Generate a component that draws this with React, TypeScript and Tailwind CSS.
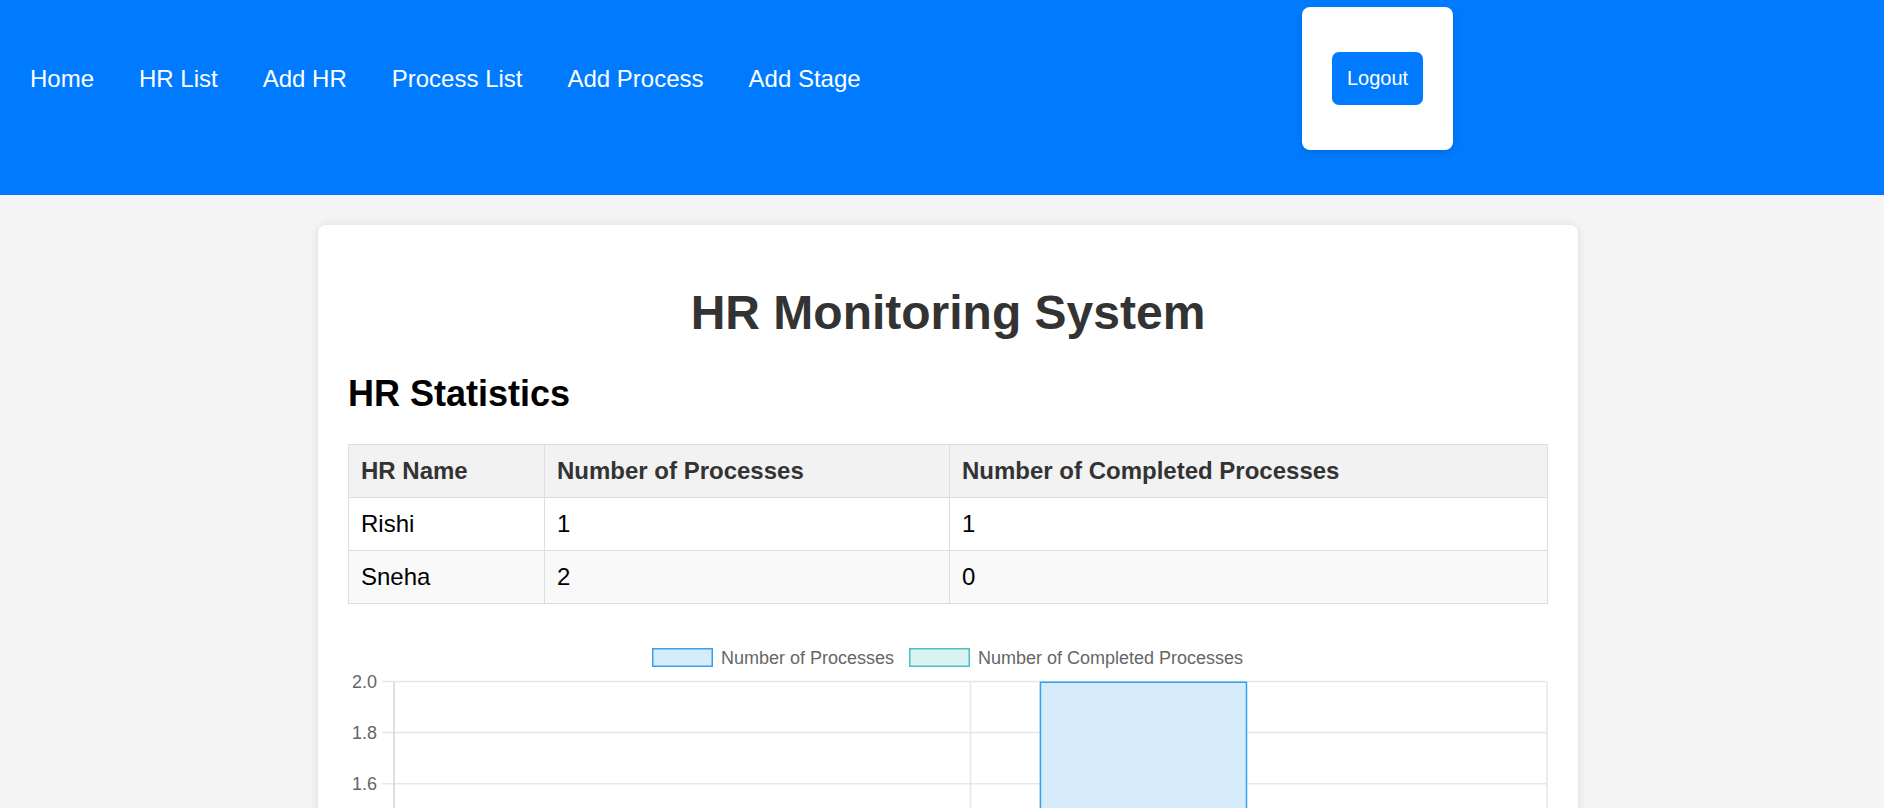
const links = ["Home", "HR List", "Add HR", "Process List", "Add Process", "Add Stage"];

const stats = [
  { name: "Rishi", total: 1, done: 1 },
  { name: "Sneha", total: 2, done: 0 },
];

// chart geometry (svg coords, svg sits at the card's content box)
const left = 46;
const right = 1199;
const top = 48.5;
const bottom = 559.5;
const maxY = 2;

function yFor(v: number) {
  return bottom - ((bottom - top) * v) / maxY;
}

function Bar({ x, w, v, fill, stroke }: { x: number; w: number; v: number; fill: string; stroke: string }) {
  if (v <= 0) return null;
  const y = yFor(v);
  return (
    <g>
      <rect x={x} y={y} width={w} height={bottom - y} fill={fill} />
      <path
        d={`M${x + 0.75} ${bottom} L${x + 0.75} ${y + 0.75} L${x + w - 0.75} ${y + 0.75} L${x + w - 0.75} ${bottom}`}
        fill="none"
        stroke={stroke}
        strokeWidth={1.5}
      />
    </g>
  );
}

function StatsChart() {
  const ticks = [0, 0.2, 0.4, 0.6, 0.8, 1, 1.2, 1.4, 1.6, 1.8, 2];
  const catW = (right - left) / stats.length;
  const groupW = catW * 0.8;
  const barSlot = groupW / 2;
  const barW = barSlot * 0.9;

  return (
    <svg width="1200" height="610" className="block" style={{ fontFamily: '"Liberation Sans", Arial, sans-serif' }}>
      {/* legend */}
      <rect x="304.75" y="15.75" width="59.5" height="17.5" fill="#d7ecfb" stroke="#36a2eb" strokeWidth="1.5" />
      <text x="373" y="31" fontSize="18" fill="#666">Number of Processes</text>
      <rect x="561.75" y="15.75" width="59.5" height="17.5" fill="#dbf2f2" stroke="#4bc0c0" strokeWidth="1.5" />
      <text x="630" y="31" fontSize="18" fill="#666">Number of Completed Processes</text>

      {/* horizontal grid + y labels */}
      {ticks.map((t) => {
        const y = yFor(t);
        return (
          <g key={t}>
            <line x1="34" x2={right} y1={y} y2={y} stroke="#e6e6e6" strokeWidth="1.5" />
            <text x="29" y={y + 6} fontSize="18" fill="#666" textAnchor="end">
              {t === 0 ? "0" : t.toFixed(1)}
            </text>
          </g>
        );
      })}

      {/* vertical grid */}
      {[0, 1, 2].map((i) => {
        const x = left + catW * i;
        return <line key={i} x1={x} x2={x} y1={top} y2={bottom + 12} stroke={i === 0 ? "#d4d4d4" : "#e6e6e6"} strokeWidth="1.5" />;
      })}

      {/* bars */}
      {stats.map((s, i) => {
        const gx = left + catW * i + (catW - groupW) / 2;
        const pad = (barSlot - barW) / 2;
        return (
          <g key={s.name}>
            <Bar x={gx + pad} w={barW} v={s.total} fill="#d7ecfb" stroke="#36a2eb" />
            <Bar x={gx + barSlot + pad} w={barW} v={s.done} fill="#dbf2f2" stroke="#4bc0c0" />
            <text x={left + catW * i + catW / 2} y={bottom + 34} fontSize="18" fill="#666" textAnchor="middle">
              {s.name}
            </text>
          </g>
        );
      })}
    </svg>
  );
}

export default function App() {
  return (
    <div className="min-h-screen bg-[#f4f4f4] font-['Liberation_Sans',Arial,sans-serif] text-[#333]">
      <nav className="bg-[#007bff] h-[195px] flex items-start pt-[7px]">
        <ul className="w-[1302px] shrink-0 h-[143px] pt-[2px] flex items-center gap-[45px] pl-[30px]">
          {links.map((l) => (
            <li key={l}>
              <a className="text-white text-[24px] leading-[28px] cursor-pointer">{l}</a>
            </li>
          ))}
        </ul>
        <div className="bg-white rounded-[8px] shadow-[0_3px_8px_rgba(0,0,0,0.12)] px-[30px] py-[45px]">
          <button className="bg-[#007bff] text-white text-[20px] leading-[23px] h-[53px] w-[91px] rounded-[7px] font-['Liberation_Sans',Arial,sans-serif]">
            Logout
          </button>
        </div>
      </nav>

      <main className="flex justify-center pt-[30px] pl-[12px] pb-[30px]">
        <div className="w-[1260px] bg-white rounded-[8px] shadow-[0_0_10px_rgba(0,0,0,0.1)] px-[30px] pt-[30px] pb-[30px]">
          <h1 className="mt-[30px] text-center text-[48px] leading-[55px] font-bold text-[#333]">HR Monitoring System</h1>
          <h2 className="mt-[33px] mb-[30px] text-[36px] leading-[41px] font-bold text-black">HR Statistics</h2>

          <table className="w-full table-fixed border-collapse text-[24px] leading-[28px]">
            <colgroup>
              <col className="w-[196px]" />
              <col className="w-[405px]" />
              <col />
            </colgroup>
            <thead>
              <tr>
                <th className="bg-[#f2f2f2] border border-[#ddd] px-[12px] py-[12px] text-left font-bold text-[#333]">HR Name</th>
                <th className="bg-[#f2f2f2] border border-[#ddd] px-[12px] py-[12px] text-left font-bold text-[#333]">Number of Processes</th>
                <th className="bg-[#f2f2f2] border border-[#ddd] px-[12px] py-[12px] text-left font-bold text-[#333]">
                  Number of Completed Processes
                </th>
              </tr>
            </thead>
            <tbody>
              {stats.map((s, i) => (
                <tr key={s.name} className={i % 2 === 1 ? "bg-[#f9f9f9]" : "bg-white"}>
                  <td className="border border-[#ddd] px-[12px] py-[12px] text-black">{s.name}</td>
                  <td className="border border-[#ddd] px-[12px] py-[12px] text-black">{s.total}</td>
                  <td className="border border-[#ddd] px-[12px] py-[12px] text-black">{s.done}</td>
                </tr>
              ))}
            </tbody>
          </table>

          <div className="mt-[29px]">
            <StatsChart />
          </div>
        </div>
      </main>
    </div>
  );
}
